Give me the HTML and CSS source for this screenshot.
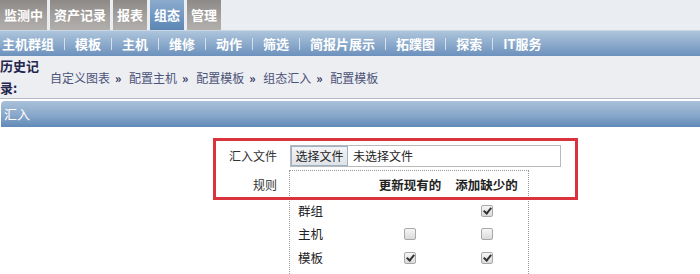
FILE: index.html
```html
<!DOCTYPE html>
<html lang="zh-CN">
<head>
<meta charset="utf-8">
<title>组态 - 汇入</title>
<link rel="stylesheet" href="styles.css">
</head>
<body>
<div class="topbar">
  <div class="tabs">
    <span class="tab">监测中</span>
    <span class="tab">资产记录</span>
    <span class="tab">报表</span>
    <span class="tab active">组态</span>
    <span class="tab">管理</span>
  </div>
</div>
<div class="subnav">
  <span class="sub">主机群组</span><span class="sep"></span>
  <span class="sub">模板</span><span class="sep"></span>
  <span class="sub">主机</span><span class="sep"></span>
  <span class="sub">维修</span><span class="sep"></span>
  <span class="sub">动作</span><span class="sep"></span>
  <span class="sub">筛选</span><span class="sep"></span>
  <span class="sub">简报片展示</span><span class="sep"></span>
  <span class="sub">拓蹼图</span><span class="sep"></span>
  <span class="sub">探索</span><span class="sep"></span>
  <span class="sub">IT服务</span>
</div>
<div class="history">
  <div class="history-label">历史记录:</div>
  <div class="crumbs">
    <span class="crumb">自定义图表</span><span class="arrow">»</span>
    <span class="crumb">配置主机</span><span class="arrow">»</span>
    <span class="crumb">配置模板</span><span class="arrow">»</span>
    <span class="crumb">组态汇入</span><span class="arrow">»</span>
    <span class="crumb">配置模板</span>
  </div>
</div>
<div class="header-bar">汇入</div>
<div class="content">
  <div class="form">
    <div class="label">汇入文件</div>
    <div class="file-input">
      <span class="file-btn">选择文件</span>
      <span class="file-name">未选择文件</span>
    </div>
    <div class="label rules-label">规则</div>
    <table class="rules">
      <thead>
        <tr><th class="c1"></th><th class="c2">更新现有的</th><th class="c3">添加缺少的</th></tr>
      </thead>
      <tbody>
        <tr><td class="c1">群组</td><td class="c2"></td><td class="c3"><span class="cb checked"></span></td></tr>
        <tr><td class="c1">主机</td><td class="c2"><span class="cb"></span></td><td class="c3"><span class="cb"></span></td></tr>
        <tr><td class="c1">模板</td><td class="c2"><span class="cb checked"></span></td><td class="c3"><span class="cb checked"></span></td></tr>
        <tr><td class="c1 spacer"></td><td class="c2"></td><td class="c3"></td></tr>
      </tbody>
    </table>
  </div>
  <div class="highlight"></div>
</div>
</body>
</html>
```
FILE: styles.css
```css
html, body {
  margin: 0;
  padding: 0;
  background: #ffffff;
  font-family: "Noto Sans CJK SC", "Liberation Sans", sans-serif;
  overflow: hidden;
}

.topbar {
  height: 30px;
  background: #eaedf1;
}
.tabs {
  display: flex;
  gap: 3px;
  height: 30px;
}
.tab {
  padding: 0 4px;
  line-height: 30px;
  font-size: 13px;
  font-weight: bold;
  color: #ffffff;
  background: linear-gradient(#8c8987, #a6a29f 60%, #b2aeab);
}
.tab.active {
  background: linear-gradient(#8cabcd, #6e95c0 60%, #5d86b4);
}

.subnav {
  display: flex;
  align-items: center;
  height: 26px;
  padding-left: 2px;
  background: linear-gradient(#aec5dc, #8dabcc 50%, #6c91bd);
  border-top: 1px solid #c8d6e4;
  box-sizing: border-box;
}
.sub {
  font-size: 13px;
  font-weight: bold;
  color: #ffffff;
  line-height: 26px;
}
.sep {
  width: 1px;
  height: 12px;
  margin: 0 10px;
  background: #d3dfeb;
}

.history {
  display: flex;
  align-items: center;
  height: 42px;
  background: #eceef2;
  border-bottom: 1px solid #b3bac3;
}
.history-label {
  width: 40px;
  font-size: 13px;
  font-weight: bold;
  line-height: 22px;
  color: #24264e;
}
.crumbs {
  margin-left: 10px;
  font-size: 12px;
  color: #4c5378;
}
.arrow {
  margin: 0 5px;
  font-weight: bold;
  color: #2e3158;
}

.header-bar {
  margin: 2px 0 0 1px;
  height: 26px;
  line-height: 26px;
  padding-left: 3px;
  font-size: 13px;
  color: #ffffff;
  border-radius: 4px 0 0 0;
  background: linear-gradient(#a9c1d9, #88a7ca 55%, #608ab7);
}

.content {
  position: relative;
}
.form {
  display: grid;
  grid-template-columns: 277px auto;
  column-gap: 13px;
  row-gap: 3px;
  align-items: start;
  padding-top: 18px;
  font-size: 12px;
  color: #222;
}
.label {
  text-align: right;
  line-height: 22px;
  color: #333;
}
.rules-label {
  padding-top: 4px;
}
.file-input {
  display: flex;
  width: 269px;
  height: 20px;
  border: 1px solid #b9b9b9;
  background: #fff;
}
.file-btn {
  width: 55px;
  text-align: center;
  line-height: 18px;
  border: 1px solid #9fb0c4;
  background: linear-gradient(#f3f4f6, #dfe3e8);
  color: #222;
}
.file-name {
  padding-left: 5px;
  line-height: 20px;
  color: #222;
}

.rules {
  margin-left: -1px;
  width: 240px;
  border: 1px dotted #9a9a9a;
  border-collapse: separate;
  border-spacing: 0;
}
.rules th {
  height: 28px;
  padding: 0;
  line-height: 16px;
  font-size: 12.5px;
  font-weight: bold;
  color: #222;
  vertical-align: middle;
}
.rules td {
  height: 23.5px;
  padding: 0;
  line-height: 16px;
  font-size: 12.5px;
  color: #222;
  vertical-align: middle;
}
.rules .c1 {
  width: 77px;
  padding-left: 8px;
  text-align: left;
}
.rules .c2 {
  width: 70px;
  text-align: center;
}
.rules .c3 {
  text-align: center;
}
.cb {
  display: block;
  margin: 0 auto;
  width: 10px;
  height: 10px;
  border: 1px solid #a8a8a8;
  border-radius: 2px;
  background: linear-gradient(#f6f6f6, #dadada);
  position: relative;
}
.cb.checked::after {
  content: "";
  position: absolute;
  left: 3px;
  top: 0px;
  width: 3px;
  height: 6px;
  border: solid #333;
  border-width: 0 2px 2px 0;
  transform: rotate(40deg);
}

.highlight {
  position: absolute;
  left: 213px;
  top: 11px;
  width: 359px;
  height: 56px;
  border: 3px solid #d9343e;
  pointer-events: none;
}
```
